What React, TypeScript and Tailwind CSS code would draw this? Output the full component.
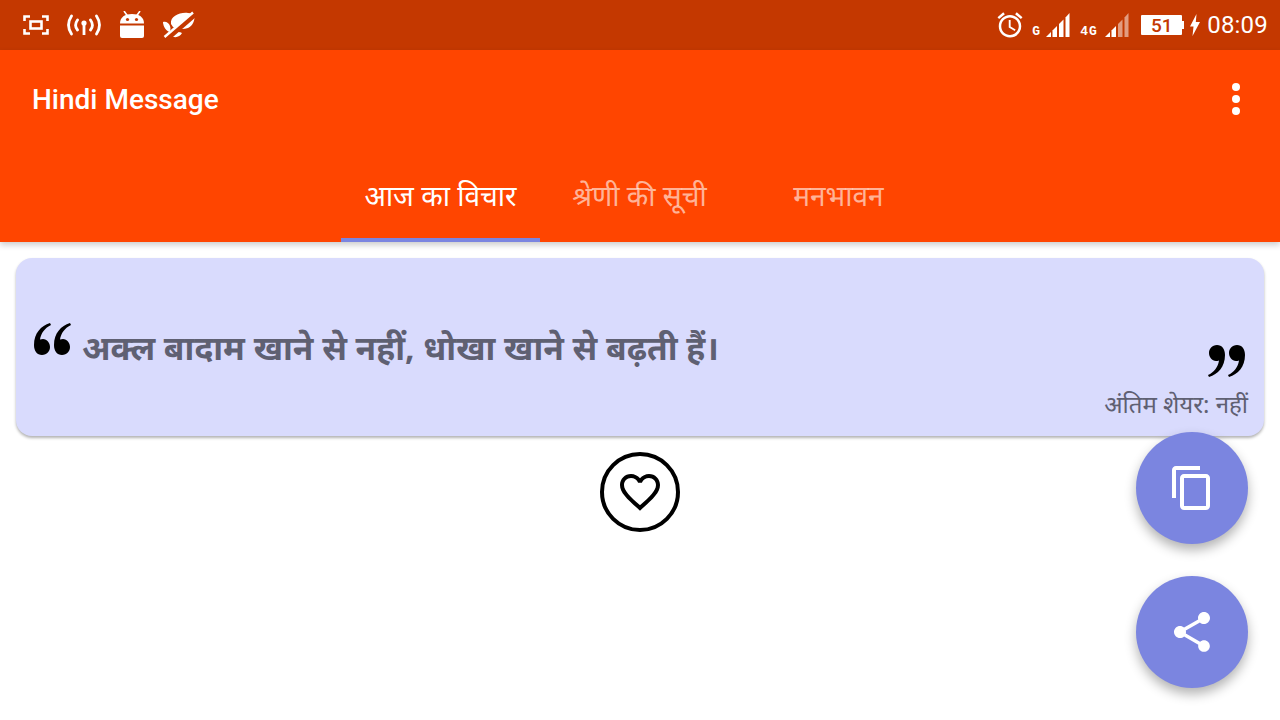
import React from 'react';

const HINDI = '"Noto Sans", "Noto Sans Devanagari", "Lohit Devanagari", Roboto, sans-serif';

function StatusLeft() {
  return (
    <div className="flex items-center">
      <svg width="26" height="20" viewBox="0 0 26 20" className="ml-[23px]" fill="none" stroke="white" strokeWidth="2.6">
        <path d="M1.5 6V1.5H7M19 1.5h5.500V6M1.500 14v4.500H7M19 18.500h5.500V14" />
        <rect x="7.500" y="6.500" width="11" height="7" />
      </svg>
      <svg width="34" height="22" viewBox="0 0 34 22" className="ml-[18px]" fill="none" stroke="white" strokeWidth="2.800" strokeLinecap="round">
        <path d="M4.500 2C.5 8 .5 14 4.500 20M29.500 2c4 6 4 12 0 18M10.500 6c-2.500 3.500-2.500 7 0 10M23.500 6c2.500 3.500 2.500 7 0 10" />
        <circle cx="17" cy="9" r="2.600" fill="white" stroke="none" />
        <path d="M17 10v11" strokeLinecap="butt" strokeWidth="2.800" />
      </svg>
      <svg width="26" height="28" viewBox="0 0 26 28" className="ml-[18px]" fill="white">
        <path d="M1 12.500C1 6 6 3 13 3s12 3 12 9.500z" />
        <path d="M5 0l3.500 5M21 0l-3.500 5" stroke="white" strokeWidth="1.600" />
        <path d="M1 14.500h24V25a2 2 0 0 1-2 2H3a2 2 0 0 1-2-2z" />
        <circle cx="8.500" cy="8.500" r="1.600" fill="#c43800" />
        <circle cx="17.500" cy="8.500" r="1.600" fill="#c43800" />
      </svg>
      <svg width="34" height="28" viewBox="0 0 34 28" className="ml-[17px]" fill="white">
        <path d="M9 13C8 5 18 1 26 2c3 0 5 1 6.500 1.500C33 9 31 15 26 17c-5 2-11 1-15-1z" />
        <path d="M1 11c3-1 6 1 7 4 .800 2.500.500 4-.500 6-3-1-6.500-5-6.500-10z" />
        <path d="M9 24c3-3 8-4 11-2-2 4-8 6-11 2z" />
        <path d="M4 28L33 3" stroke="#c43800" strokeWidth="6" />
        <path d="M2.500 26L31 1.500" stroke="white" strokeWidth="2.400" />
      </svg>
    </div>
  );
}

function SignalBars({ faded }: { faded?: boolean }) {
  return (
    <svg width="24" height="24" viewBox="0 0 24 24" fill="white">
      <path d="M0 24l5-5v5z" />
      <path d="M6.500 17.500l4.500-4.500v11H6.500z" />
      <path d="M13 11l4.500-4.500V24H13z" fillOpacity={faded ? 0.5 : 1} />
      <path d="M19.500 4.500L23.500 0v24h-4z" fillOpacity={faded ? 0.5 : 1} />
    </svg>
  );
}

function StatusRight() {
  return (
    <div className="flex items-center text-white">
      <svg width="30" height="30" viewBox="0 0 24 24" fill="white">
        <path d="M22 5.720l-4.600-3.860-1.290 1.530 4.600 3.860L22 5.720zM7.880 3.390L6.600 1.860 2 5.710l1.290 1.530 4.590-3.850zM12.500 8H11v6l4.750 2.850.75-1.230-4-2.370V8zM12 4c-4.970 0-9 4.030-9 9s4.020 9 9 9c4.970 0 9-4.030 9-9s-4.030-9-9-9zm0 16c-3.870 0-7-3.130-7-7s3.130-7 7-7 7 3.130 7 7-3.130 7-7 7z" />
      </svg>
      <span className="ml-[7px] mt-[13px] w-[8px] text-[13px] font-bold leading-none font-['Liberation_Mono']">G</span>
      <div className="ml-[6px]"><SignalBars /></div>
      <span className="ml-[10px] mt-[13px] w-[18px] text-[13px] font-bold leading-none font-['Liberation_Mono'] tracking-[1px]">4G</span>
      <div className="ml-[7px]"><SignalBars faded /></div>
      <div className="ml-[12px] flex items-center">
        <div className="flex h-[20px] w-[41px] items-center justify-center rounded-[1px] bg-white text-[19px] font-medium leading-none text-[#c43800] font-['Roboto']">51</div>
        <div className="h-[8px] w-[2px] bg-white" />
      </div>
      <svg width="10" height="22" viewBox="0 0 10 22" fill="white" className="ml-[6px]">
        <path d="M6.500 0L0 12.500h3.500L2.500 22 10 8H5.800z" />
      </svg>
      <span className="ml-[7px] mr-[12px] text-[24px] leading-none font-['Roboto'] tracking-[0.2px]">08:09</span>
    </div>
  );
}

function QuoteOpen() {
  return (
    <svg width="38" height="34" viewBox="0 0 38 34" fill="black" className="shrink-0">
      <path d="M17 1C8 4 1 11 1 23c0 6 3 10 8 10s8-4 8-8-3-8-7-8c-1 0-2 .200-3 .600C8 11 12 6 18 3z" />
      <path d="M37 1C28 4 21 11 21 23c0 6 3 10 8 10s8-4 8-8-3-8-7-8c-1 0-2 .200-3 .600C28 11 32 6 38 3z" />
    </svg>
  );
}

function QuoteClose() {
  return (
    <svg width="38" height="34" viewBox="0 0 38 34" fill="black" className="rotate-180">
      <path d="M17 1C8 4 1 11 1 23c0 6 3 10 8 10s8-4 8-8-3-8-7-8c-1 0-2 .200-3 .600C8 11 12 6 18 3z" />
      <path d="M37 1C28 4 21 11 21 23c0 6 3 10 8 10s8-4 8-8-3-8-7-8c-1 0-2 .200-3 .600C28 11 32 6 38 3z" />
    </svg>
  );
}

function Fab({ children }: { children: React.ReactNode }) {
  return (
    <div className="flex h-[112px] w-[112px] items-center justify-center rounded-full bg-[#7b85e0] shadow-[0_6px_12px_rgba(0,0,0,0.3)]">
      {children}
    </div>
  );
}

export default function App() {
  return (
    <div className="relative h-[720px] w-[1280px] overflow-hidden bg-white font-['Roboto']">
      <div className="flex h-[50px] items-center justify-between bg-[#c43800]">
        <StatusLeft />
        <StatusRight />
      </div>

      <div className="h-[192px] bg-[#ff4500] shadow-[0_3px_6px_rgba(0,0,0,0.2)]">
        <div className="flex h-[100px] items-center justify-between pl-[32px] pr-[40px]">
          <span className="text-[28px] font-medium leading-none text-white">Hindi Message</span>
          <div className="flex -translate-y-[1px] flex-col gap-[4px]">
            <span className="h-[8px] w-[8px] rounded-full bg-white" />
            <span className="h-[8px] w-[8px] rounded-full bg-white" />
            <span className="h-[8px] w-[8px] rounded-full bg-white" />
          </div>
        </div>
        <div className="flex h-[92px] justify-center pr-[1px]" style={{ fontFamily: HINDI }}>
          <div className="flex w-[199px] items-start justify-center border-b-[4px] border-[#7b85e0] pt-[26px] text-[28px] leading-[38px] text-white">आज का विचार</div>
          <div className="flex w-[199px] items-start justify-center pt-[26px] text-[28px] leading-[38px] text-white/60">श्रेणी की सूची</div>
          <div className="flex w-[199px] items-start justify-center pt-[26px] text-[28px] leading-[38px] text-white/60">मनभावन</div>
        </div>
      </div>

      <div className="mx-[16px] mt-[16px] flex h-[178px] flex-col rounded-[16px] bg-[#d9dbfd] pl-[17px] pr-[18px] shadow-[0_2px_3px_rgba(0,0,0,0.3)]" style={{ fontFamily: HINDI }}>
        <div className="mt-[64px] flex items-start">
          <QuoteOpen />
          <span className="ml-[11px] mt-[3px] text-[33.500px] font-bold leading-[44px] text-[#5f6072]">अक्ल बादाम खाने से नहीं, धोखा खाने से बढ़ती हैं।</span>
        </div>
        <div className="-mt-[25px] flex justify-end"><QuoteClose /></div>
        <div className="-mr-[2px] mt-[11px] text-right text-[24px] leading-[30px] text-[#5f6072]">अंतिम शेयर: नहीं</div>
      </div>

      <div className="mt-[16px] flex justify-center">
        <div className="flex h-[80px] w-[80px] items-center justify-center rounded-full border-[4px] border-black">
          <svg width="48" height="48" viewBox="0 0 24 24" fill="black">
            <path d="M16.500 3c-1.740 0-3.410.810-4.500 2.090C10.910 3.810 9.240 3 7.500 3 4.420 3 2 5.420 2 8.500c0 3.780 3.400 6.860 8.550 11.540L12 21.350l1.450-1.320C18.600 15.360 22 12.280 22 8.500 22 5.420 19.580 3 16.500 3zm-4.400 15.550l-.100.100-.100-.100C7.140 14.240 4 11.390 4 8.500 4 6.500 5.500 5 7.500 5c1.540 0 3.040.990 3.570 2.360h1.870C13.460 5.990 14.960 5 16.500 5c2 0 3.500 1.500 3.500 3.500 0 2.890-3.140 5.740-7.900 10.050z" />
          </svg>
        </div>
      </div>

      <div className="absolute right-[32px] top-[432px] flex flex-col gap-[32px]">
        <Fab>
          <svg width="48" height="48" viewBox="0 0 24 24" fill="white">
            <path d="M16 1H4c-1.100 0-2 .900-2 2v14h2V3h12V1zm3 4H8c-1.100 0-2 .900-2 2v14c0 1.100.900 2 2 2h11c1.100 0 2-.900 2-2V7c0-1.100-.900-2-2-2zm0 16H8V7h11v14z" />
          </svg>
        </Fab>
        <Fab>
          <svg width="48" height="48" viewBox="0 0 24 24" fill="white">
            <path d="M18 16.080c-.760 0-1.440.300-1.960.770L8.910 12.700c.050-.230.090-.460.090-.700s-.040-.470-.090-.700l7.050-4.110c.540.500 1.250.810 2.040.810 1.660 0 3-1.340 3-3s-1.340-3-3-3-3 1.340-3 3c0 .240.040.470.090.700L8.040 9.810C7.500 9.310 6.790 9 6 9c-1.660 0-3 1.340-3 3s1.340 3 3 3c.790 0 1.500-.310 2.040-.810l7.120 4.160c-.050.210-.080.430-.080.650 0 1.610 1.310 2.920 2.920 2.920 1.610 0 2.920-1.310 2.920-2.920s-1.310-2.920-2.920-2.920z" />
          </svg>
        </Fab>
      </div>
    </div>
  );
}
